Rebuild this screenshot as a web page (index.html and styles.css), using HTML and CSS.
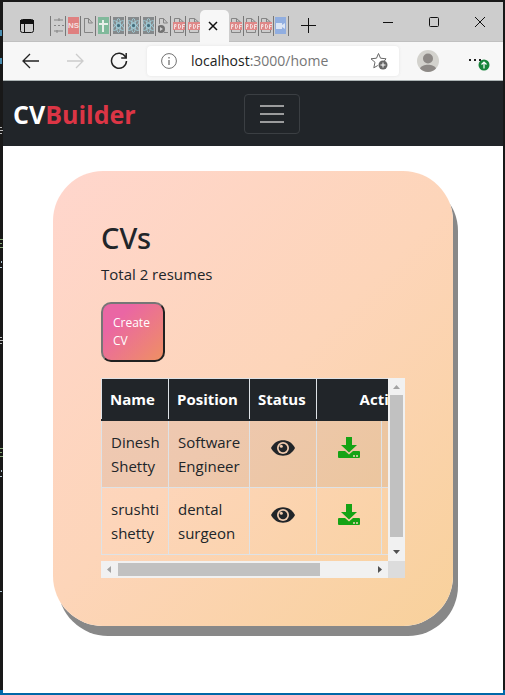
FILE: index.html
```html
<!DOCTYPE html>
<html lang="en">
<head>
<meta charset="utf-8">
<meta name="viewport" content="width=device-width, initial-scale=1">
<title>CVBuilder</title>
<link rel="stylesheet" href="styles.css">
</head>
<body>
<svg class="sprite" aria-hidden="true">
  <symbol id="pdf" viewBox="0 0 12 17">
    <path d="M1.500 5V1.500h5L10.500 5v1M6.500 1.500V5h4M1.500 13v2.500h9V13" fill="none" stroke="#858585"/>
    <rect x="0" y="5" width="12" height="8" fill="#df8888"/>
    <path d="M1.500 12V7.500h1.500v2H1.500M5.500 7v4.500h1L7.500 10V8.500L6.500 7.500h-1M9.500 12V7.500H12M9.500 9.500h2" fill="none" stroke="#f2dddd"/>
  </symbol>
  <symbol id="react" viewBox="0 0 11 17">
    <rect width="11" height="17" fill="#85898b"/>
    <g fill="none" stroke="#9fcbd6"><ellipse cx="5.500" cy="8.500" rx="2" ry="7"/><ellipse cx="5.500" cy="8.500" rx="2" ry="7" transform="rotate(50 5.500 8.500)"/><ellipse cx="5.500" cy="8.500" rx="2" ry="7" transform="rotate(-50 5.500 8.500)"/></g>
    <circle cx="5.500" cy="8.500" r="1.500" fill="#3f7080"/>
  </symbol>
  <symbol id="page" viewBox="0 0 11 17"><path d="M1.500 1v14.500H10M1.500 1.500h4L9.500 6M5.500 1.500V6h4" fill="none" stroke="#858585"/></symbol>
  <symbol id="eye" viewBox="0 0 24 16">
    <path d="M0 8C3 2.500 7 .3 12 .3S21 2.500 24 8c-3 5.500-7 7.700-12 7.700S3 13.500 0 8z" fill="#212529"/>
    <circle cx="12" cy="8" r="6" fill="#f1cbae"/>
    <circle cx="12" cy="8" r="4.300" fill="#212529"/><circle cx="10.300" cy="6.200" r="1.500" fill="#f1cbae"/>
  </symbol>
  <symbol id="download" viewBox="0 0 22 22">
    <path d="M8 0h6v8h5l-8 7.500L3 8h5z" fill="#15a315"/>
    <path d="M1 14h6l4 3.500 4-3.500h6q1 0 1 1v5q0 1-1 1H1q-1 0-1-1v-5q0-1 1-1z" fill="#15a315"/>
    <path d="M15 18h2v2h-2zM18 18h2v2h-2z" fill="#b9c890"/>
  </symbol>
</svg>
<svg class="backdrop" viewBox="0 0 3 695" width="3" height="695" aria-hidden="true">
  <path d="M0 30h2v6H0zM0 58h2v6H0z" fill="#4a8db0"/>
  <path d="M0 127h2v1H0zM0 130h3v1H0zM0 133h2v1H0zM0 337h2v1H0zM0 340h3v1H0zM0 343h2v1H0z" fill="#b9b9b9"/>
  <path d="M0 239h3v1H0zM0 243h2v1H0zM0 247h3v1H0zM0 448h3v1H0zM0 452h2v1H0zM0 456h3v1H0z" fill="#87a877"/>
  <path d="M1 261h1v2H1zM0 267h2v1H0zM1 470h1v2H1zM0 476h2v1H0zM0 591h2v1H0z" fill="#b1c6d2"/>
</svg>
<div class="window">
  <header class="tabs">
    <button class="tab-actions" aria-label="Tab actions"><svg width="16" height="16" viewBox="0 0 16 16"><rect x="1.500" y="1.500" width="13" height="13" rx="2" fill="none" stroke="#111"/><path d="M1 2h14v4H1z" fill="#111"/><path d="M5.500 5v9" stroke="#111"/></svg></button>
    <div class="favicons">
      <span><svg viewBox="0 0 11 17"><path d="M1 3h9M1 14h9M6 1v3M4 13v3M1 8.500h2M5 8.500h2M9 8.500h2" stroke="#858585" fill="none"/></svg></span>
      <span class="ns">NS</span>
      <span><svg><use href="#page"/></svg></span>
      <span><svg viewBox="0 0 11 17"><rect width="11" height="17" fill="#80b99b"/><path d="M5 3v12M1 7h9" stroke="#e8eee9" stroke-width="2"/></svg></span>
      <span><svg><use href="#react"/></svg></span>
      <span><svg><use href="#react"/></svg></span>
      <span><svg><use href="#react"/></svg></span>
      <span><svg viewBox="0 0 11 17"><path d="M1.500 7V1.500h4L9.500 6M5.500 1.500V6h4M6 15.500h4" fill="none" stroke="#858585"/><circle cx="3" cy="12" r="4" fill="#727272"/><path d="M2 10l3 2-3 2z" fill="#ccc"/></svg></span>
      <span><svg class="wide"><use href="#pdf"/></svg></span>
      <span><svg class="wide"><use href="#pdf"/></svg></span>
    </div>
    <button class="active-tab" aria-label="Close tab"><svg width="10" height="10" viewBox="0 0 10 10"><path d="M1 1l8 8M9 1L1 9" stroke="#111" stroke-width="1.500"/></svg></button>
    <div class="favicons after">
      <span><svg class="wide"><use href="#pdf"/></svg></span>
      <span><svg class="wide"><use href="#pdf"/></svg></span>
      <span><svg class="wide"><use href="#pdf"/></svg></span>
      <span><svg viewBox="0 0 11 17"><rect width="11" height="17" fill="#91aee0"/><path d="M1 6h6v6H1zM7 8l3-2v6l-3-2z" fill="#dce5f4"/></svg></span>
    </div>
    <button class="new-tab" aria-label="New tab"><svg width="15" height="15" viewBox="0 0 15 15"><path d="M7.500 0v15M0 7.500h15" stroke="#111"/></svg></button>
    <div class="controls">
      <button aria-label="Minimize"><svg width="12" height="12" viewBox="0 0 12 12"><path d="M1 6.500h10" stroke="#111"/></svg></button>
      <button aria-label="Maximize"><svg width="12" height="12" viewBox="0 0 12 12"><rect x="1.500" y="1.500" width="9" height="9" rx="1" fill="none" stroke="#111"/></svg></button>
      <button aria-label="Close"><svg width="12" height="12" viewBox="0 0 12 12"><path d="M1 1l10 10M11 1L1 11" stroke="#111"/></svg></button>
    </div>
  </header>
  <div class="toolbar">
    <button aria-label="Back"><svg width="18" height="16" viewBox="0 0 18 16"><path d="M17 8H2M8 1L1 8l7 7" fill="none" stroke="#222" stroke-width="1.300"/></svg></button>
    <button class="forward" aria-label="Forward" disabled><svg width="18" height="16" viewBox="0 0 18 16"><path d="M1 8h15M10 1l7 7-7 7" fill="none" stroke="#ccc" stroke-width="1.300"/></svg></button>
    <button class="refresh" aria-label="Refresh"><svg width="18" height="18" viewBox="0 0 18 18"><path d="M15.500 5A7.500 7.500 0 1 0 16.500 9M16.200 1v5h-5" fill="none" stroke="#222" stroke-width="1.500"/></svg></button>
    <div class="address">
      <svg width="16" height="16" viewBox="0 0 16 16" aria-hidden="true"><circle cx="8" cy="8" r="7.400" fill="none" stroke="#717171"/><path d="M8 7v5M8 4v1.500" stroke="#717171" stroke-width="1.300"/></svg>
      <a href="#" class="url">localhost<span>:3000/home</span></a>
      <button aria-label="Add to favorites"><svg width="18" height="18" viewBox="0 0 18 18"><path d="M8.500 1.500l2 4.700 5.500.6-2 2.700M8.500 1.500l-2 4.700-5.500.6 4 3.500-1.200 5.500 4-2.300" fill="none" stroke="#666"/><circle cx="13" cy="13" r="4.500" fill="#666"/><path d="M13 10.500v5M10.500 13h5" stroke="#fff"/></svg></button>
    </div>
    <button class="profile" aria-label="Profile"><svg width="22" height="22" viewBox="0 0 22 22"><circle cx="11" cy="11" r="11" fill="#d3d2cd"/><circle cx="11" cy="8.500" r="5" fill="#8d8986"/><path d="M3 18.500C5 13.500 17 13.500 19 18.500A11 11 0 0 1 3 18.500z" fill="#8d8986"/></svg></button>
    <button class="more" aria-label="Settings and more"><svg width="22" height="22" viewBox="0 0 22 22"><path d="M1 9h2v2H1zM6 9h2v2H6zM11 9h2v2h-2z" fill="#222"/><circle cx="16" cy="15" r="5.500" fill="#17843b"/><path d="M16 18.500V12M13.500 14.500L16 12l2.500 2.500" fill="none" stroke="#fff" stroke-width="1.200"/></svg></button>
  </div>
  <nav class="navbar">
    <a class="brand" href="#">CV<span>Builder</span></a>
    <button class="toggler" aria-label="Toggle navigation"><svg width="30" height="30" viewBox="0 0 30 30"><path d="M3 7h24M3 15h24M3 23h24" stroke="#9b9c9d" stroke-width="2"/></svg></button>
  </nav>
  <main>
    <section class="card">
      <h1>CVs</h1>
      <p>Total 2 resumes</p>
      <button class="create">Create CV</button>
      <div class="scroller">
        <div class="view">
          <table>
            <colgroup><col class="c-name"><col class="c-position"><col class="c-status"><col class="c-download"><col class="c-delete"></colgroup>
            <thead><tr><th>Name</th><th>Position</th><th>Status</th><th class="actions" colspan="2">Actions</th></tr></thead>
            <tbody>
              <tr><td>Dinesh Shetty</td><td>Software Engineer</td>
                <td class="icon"><button aria-label="View"><svg width="24" height="16"><use href="#eye"/></svg></button></td>
                <td class="icon"><button aria-label="Download"><svg width="22" height="22"><use href="#download"/></svg></button></td><td></td></tr>
              <tr><td>srushti shetty</td><td>dental surgeon</td>
                <td class="icon"><button aria-label="View"><svg width="24" height="16"><use href="#eye"/></svg></button></td>
                <td class="icon"><button aria-label="Download"><svg width="22" height="22"><use href="#download"/></svg></button></td><td></td></tr>
            </tbody>
          </table>
        </div>
        <div class="bar vertical" aria-hidden="true">
          <svg width="17" height="17" viewBox="0 0 17 17"><path d="M5 11h7L8.500 7z" fill="#a3a3a3"/></svg>
          <div class="track"><i></i></div>
          <svg width="17" height="17" viewBox="0 0 17 17"><path d="M5 6h7l-3.500 4z" fill="#505050"/></svg>
        </div>
        <div class="bar horizontal" aria-hidden="true">
          <svg width="17" height="17" viewBox="0 0 17 17"><path d="M10 5v7L6 8.500z" fill="#a3a3a3"/></svg>
          <div class="track"><i></i></div>
          <svg width="17" height="17" viewBox="0 0 17 17"><path d="M7 5v7l4-3.500z" fill="#505050"/></svg>
        </div>
        <div class="corner"></div>
      </div>
    </section>
  </main>
</div>
</body>
</html>
```
FILE: styles.css
```css
* { box-sizing: border-box; }
body {
  margin: 0;
  min-height: 100vh;
  padding: 2px 2px 2px 3px;
  display: flex;
  background: linear-gradient(#181818, #181818) top / 100% calc(100% - 5px) no-repeat #0067a8;
  font: 15px/24px "Open Sans", "Noto Sans", sans-serif;
  color: #212529;
}
button { padding: 0; border: 0; background: none; font: inherit; display: flex; align-items: center; justify-content: center; }
svg { display: block; flex: none; }
.sprite { position: absolute; width: 0; height: 0; }
.backdrop { position: absolute; left: 0; top: 0; }
.window { flex: 1; min-width: 0; display: flex; flex-direction: column; background: #fff; }

.tabs { display: flex; height: 40px; background: #cdcdcd; border-bottom: 1px solid #c0c0c0; }
.tab-actions { width: 47px; padding-top: 8px; }
.favicons { display: flex; align-items: center; padding-top: 8px; }
.favicons span { display: flex; width: 15px; height: 20px; align-items: center; padding-left: 2px; border-left: 1px solid #777; }
.favicons svg { width: 11px; height: 17px; }
.favicons svg.wide { width: 12px; }
.favicons .ns {
  padding-left: 1px;
  justify-content: center;
  background: linear-gradient(#df8080, #df8080) center / 11px 17px no-repeat;
  color: #f4dede;
  font: 700 8px/17px "Liberation Sans", sans-serif;
}
.active-tab { width: 29px; height: 32px; margin-top: 8px; background: #f7f7f7; border-radius: 5px 5px 0 0; }
.active-tab svg { margin-right: 4px; }
.favicons.after span { border-left: 0; border-right: 1px solid #777; padding-left: 1px; }
.new-tab { width: 38px; padding-top: 8px; }
.controls { display: flex; margin-left: auto; }
.controls button { width: 46px; height: 40px; }

.toolbar { display: flex; align-items: center; height: 39px; background: #f7f7f7; border-bottom: 1px solid #adb5b5; }
.toolbar > button { width: 44px; height: 36px; }
.toolbar > button:first-child { width: 56px; }
.toolbar .forward { padding-right: 12px; }
.toolbar .refresh { padding-right: 12px; }
.address { flex: 1; display: flex; align-items: center; height: 30px; padding: 0 11px 0 14px; background: #fff; border-radius: 4px; box-shadow: 0 0 3px #e2e2e2; }
.url { flex: 1; margin-left: 14px; font-size: 14px; color: #222; text-decoration: none; }
.url span { color: #767676; }
.toolbar .profile { width: 58px; }
.toolbar .more { width: 46px; padding-right: 2px; }

.navbar { display: flex; justify-content: space-between; align-items: center; height: 65px; padding: 0 203px 0 10px; background: #212529; }
.brand { font-size: 25px; line-height: 36px; font-weight: 700; color: #fff; text-decoration: none; }
.brand span { color: #dc3545; }
.toggler { width: 56px; height: 40px; border: 1px solid #3b3f43; border-radius: 4px; }

main { padding: 25px 10% 57px; }
.card { padding: 48px; border-radius: 50px; background: linear-gradient(135deg, #ffd6cd, #fdd5b9 50%, #f8d19b); box-shadow: 5px 10px #888; }
h1 { margin: 0; padding: 1px 0 6px; font: 500 29px/36px "Noto Sans", "Open Sans", sans-serif; }
p { margin: 0 0 16px; }
.create {
  width: 64px; height: 60px; padding: 0 10px; margin-bottom: 16px;
  border: 2px solid; border-color: #767676 #212121 #212121 #767676; border-radius: 10px;
  background: linear-gradient(135deg, #ea66a4 25%, #ef9063);
  color: #fff; font-size: 12px; line-height: 18px; text-align: left;
}
.scroller { display: grid; grid-template: 183px 17px / 1fr 17px; }
.view { overflow: hidden; }
table { width: 358px; table-layout: fixed; border-collapse: collapse; }
.c-name { width: 67px; }
.c-position { width: 81px; }
.c-status { width: 67px; }
.c-download { width: 65px; }
th, td { padding: 8px; border: 1px solid #dee2e6; vertical-align: top; text-align: left; }
td { padding: 9px; }
th { background: #212529; color: #fff; font-weight: 700; border-bottom: 2px solid #212529; }
tbody tr:first-child { background: rgba(0, 0, 0, .06); }
.actions { text-align: center; }
.icon { padding-top: 15px; }
.icon button { width: 100%; height: 24px; }

.bar { display: flex; background: #f1f1f1; }
.vertical { flex-direction: column; }
.track { flex: 1; display: flex; }
.track i { background: #c1c1c1; }
.vertical .track { flex-direction: column; padding: 0 2px; }
.vertical i { height: 95%; }
.horizontal .track { padding: 2px 0; }
.horizontal i { width: 80%; }
.corner { background: #dcdcdc; }
```
